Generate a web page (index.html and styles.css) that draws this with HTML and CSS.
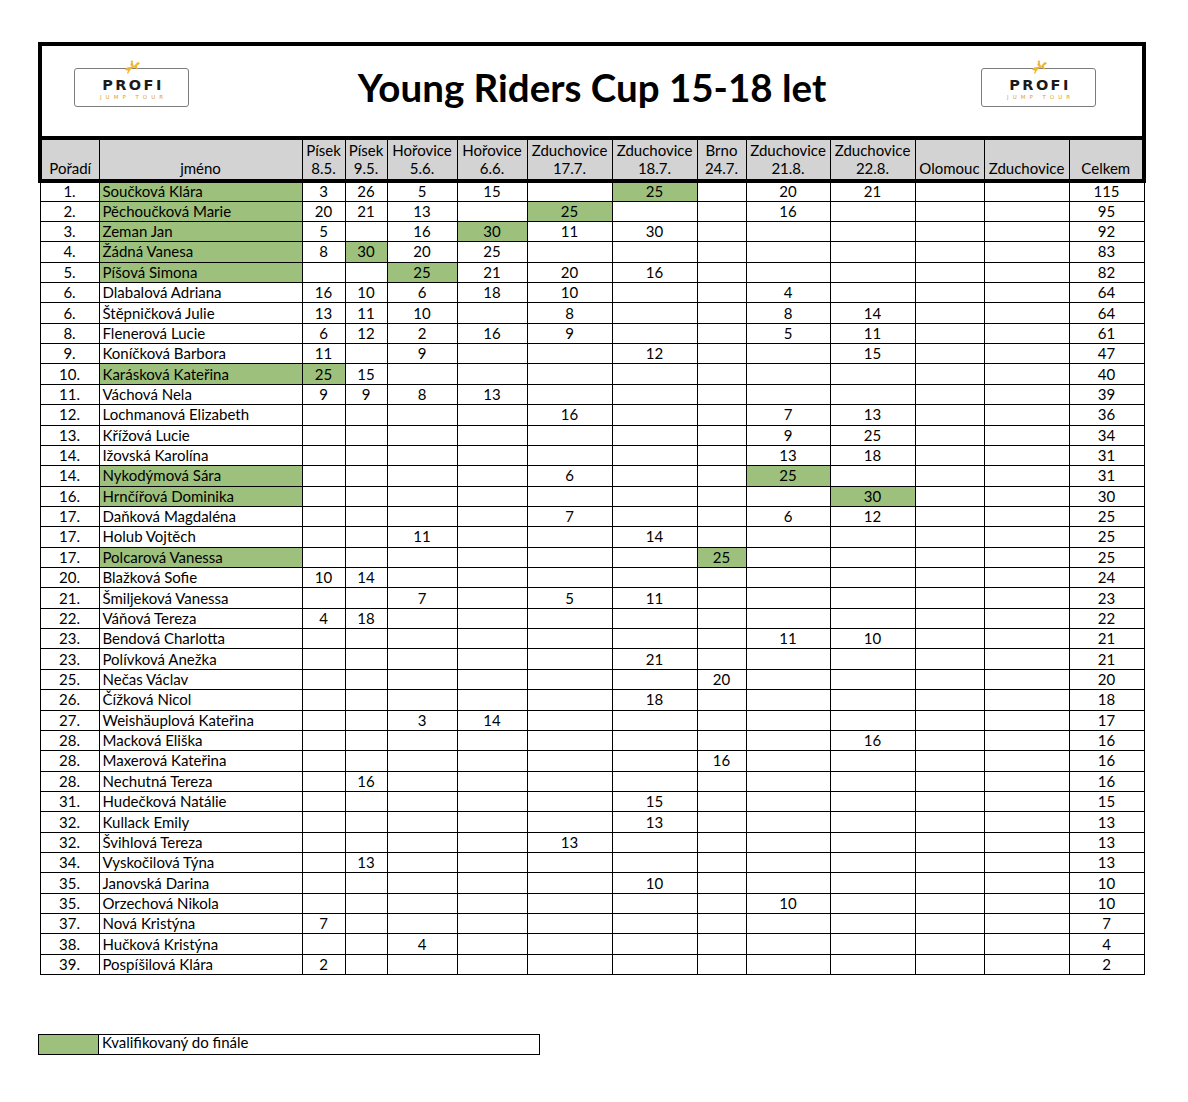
FILE: index.html
```html
<!DOCTYPE html>
<html lang="cs">
<head>
<meta charset="utf-8">
<title>Young Riders Cup 15-18 let</title>
<link rel="stylesheet" href="styles.css">
</head>
<body>
<table class="sheet">
<colgroup>
<col class="w59"><col class="w203"><col class="w43"><col class="w42"><col class="w70"><col class="w70"><col class="w85"><col class="w85"><col class="w49"><col class="w84"><col class="w85"><col class="w69"><col class="w85"><col class="w75">
</colgroup>
<thead>
<tr class="title-row">
<td colspan="14" class="title-cell">
<div class="title-grid">
<div class="logo logo-left">
<svg class="horse" viewBox="0 0 28 24" width="19" height="15"><path d="M2 15 C4 12 7 11 10 11 L17 9 C19 6 21 4 23 3 L26 5 L24 7 L22 8 C21 10 21 12 23 14 L21 15 C19 13 18 12 17 12 C15 13 13 14 12 14 L9 18 L7 22 L5 21 L7 17 C5 16 3 16 2 15 Z"/><circle cx="13" cy="2.6" r="1.9"/><path d="M11.5 4.5 L14.5 4.5 L16 9.5 L13 10.5 L10.5 8 Z"/></svg>
<span class="profi">PROFI</span>
<span class="jump">JUMP TOUR</span>
</div>
<h1 class="title">Young Riders Cup 15-18 let</h1>
<div class="logo logo-right">
<svg class="horse" viewBox="0 0 28 24" width="19" height="15"><path d="M2 15 C4 12 7 11 10 11 L17 9 C19 6 21 4 23 3 L26 5 L24 7 L22 8 C21 10 21 12 23 14 L21 15 C19 13 18 12 17 12 C15 13 13 14 12 14 L9 18 L7 22 L5 21 L7 17 C5 16 3 16 2 15 Z"/><circle cx="13" cy="2.6" r="1.9"/><path d="M11.5 4.5 L14.5 4.5 L16 9.5 L13 10.5 L10.5 8 Z"/></svg>
<span class="profi">PROFI</span>
<span class="jump">JUMP TOUR</span>
</div>
</div>
</td>
</tr>
<tr class="head-row">
<th class="first">Pořadí</th><th>jméno</th><th>Písek<br>8.5.</th><th>Písek<br>9.5.</th><th>Hořovice<br>5.6.</th><th>Hořovice<br>6.6.</th><th>Zduchovice<br>17.7.</th><th>Zduchovice<br>18.7.</th><th>Brno<br>24.7.</th><th>Zduchovice<br>21.8.</th><th>Zduchovice<br>22.8.</th><th>Olomouc</th><th>Zduchovice</th><th class="last">Celkem</th>
</tr>
</thead>
<tbody>
<tr><td>1.</td><td class="nm g">Součková Klára</td><td>3</td><td>26</td><td>5</td><td>15</td><td></td><td class="g">25</td><td></td><td>20</td><td>21</td><td></td><td></td><td>115</td></tr>
<tr><td>2.</td><td class="nm g">Pěchoučková Marie</td><td>20</td><td>21</td><td>13</td><td></td><td class="g">25</td><td></td><td></td><td>16</td><td></td><td></td><td></td><td>95</td></tr>
<tr><td>3.</td><td class="nm g">Zeman Jan</td><td>5</td><td></td><td>16</td><td class="g">30</td><td>11</td><td>30</td><td></td><td></td><td></td><td></td><td></td><td>92</td></tr>
<tr><td>4.</td><td class="nm g">Žádná Vanesa</td><td>8</td><td class="g">30</td><td>20</td><td>25</td><td></td><td></td><td></td><td></td><td></td><td></td><td></td><td>83</td></tr>
<tr><td>5.</td><td class="nm g">Píšová Simona</td><td></td><td></td><td class="g">25</td><td>21</td><td>20</td><td>16</td><td></td><td></td><td></td><td></td><td></td><td>82</td></tr>
<tr><td>6.</td><td class="nm">Dlabalová Adriana</td><td>16</td><td>10</td><td>6</td><td>18</td><td>10</td><td></td><td></td><td>4</td><td></td><td></td><td></td><td>64</td></tr>
<tr><td>6.</td><td class="nm">Štěpničková Julie</td><td>13</td><td>11</td><td>10</td><td></td><td>8</td><td></td><td></td><td>8</td><td>14</td><td></td><td></td><td>64</td></tr>
<tr><td>8.</td><td class="nm">Flenerová Lucie</td><td>6</td><td>12</td><td>2</td><td>16</td><td>9</td><td></td><td></td><td>5</td><td>11</td><td></td><td></td><td>61</td></tr>
<tr><td>9.</td><td class="nm">Koníčková Barbora</td><td>11</td><td></td><td>9</td><td></td><td></td><td>12</td><td></td><td></td><td>15</td><td></td><td></td><td>47</td></tr>
<tr><td>10.</td><td class="nm g">Karásková Kateřina</td><td class="g">25</td><td>15</td><td></td><td></td><td></td><td></td><td></td><td></td><td></td><td></td><td></td><td>40</td></tr>
<tr><td>11.</td><td class="nm">Váchová Nela</td><td>9</td><td>9</td><td>8</td><td>13</td><td></td><td></td><td></td><td></td><td></td><td></td><td></td><td>39</td></tr>
<tr><td>12.</td><td class="nm">Lochmanová Elizabeth</td><td></td><td></td><td></td><td></td><td>16</td><td></td><td></td><td>7</td><td>13</td><td></td><td></td><td>36</td></tr>
<tr><td>13.</td><td class="nm">Křížová Lucie</td><td></td><td></td><td></td><td></td><td></td><td></td><td></td><td>9</td><td>25</td><td></td><td></td><td>34</td></tr>
<tr><td>14.</td><td class="nm">Ižovská Karolína</td><td></td><td></td><td></td><td></td><td></td><td></td><td></td><td>13</td><td>18</td><td></td><td></td><td>31</td></tr>
<tr><td>14.</td><td class="nm g">Nykodýmová Sára</td><td></td><td></td><td></td><td></td><td>6</td><td></td><td></td><td class="g">25</td><td></td><td></td><td></td><td>31</td></tr>
<tr><td>16.</td><td class="nm g">Hrnčířová Dominika</td><td></td><td></td><td></td><td></td><td></td><td></td><td></td><td></td><td class="g">30</td><td></td><td></td><td>30</td></tr>
<tr><td>17.</td><td class="nm">Daňková Magdaléna</td><td></td><td></td><td></td><td></td><td>7</td><td></td><td></td><td>6</td><td>12</td><td></td><td></td><td>25</td></tr>
<tr><td>17.</td><td class="nm">Holub Vojtěch</td><td></td><td></td><td>11</td><td></td><td></td><td>14</td><td></td><td></td><td></td><td></td><td></td><td>25</td></tr>
<tr><td>17.</td><td class="nm g">Polcarová Vanessa</td><td></td><td></td><td></td><td></td><td></td><td></td><td class="g">25</td><td></td><td></td><td></td><td></td><td>25</td></tr>
<tr><td>20.</td><td class="nm">Blažková Sofie</td><td>10</td><td>14</td><td></td><td></td><td></td><td></td><td></td><td></td><td></td><td></td><td></td><td>24</td></tr>
<tr><td>21.</td><td class="nm">Šmiljeková Vanessa</td><td></td><td></td><td>7</td><td></td><td>5</td><td>11</td><td></td><td></td><td></td><td></td><td></td><td>23</td></tr>
<tr><td>22.</td><td class="nm">Váňová Tereza</td><td>4</td><td>18</td><td></td><td></td><td></td><td></td><td></td><td></td><td></td><td></td><td></td><td>22</td></tr>
<tr><td>23.</td><td class="nm">Bendová Charlotta</td><td></td><td></td><td></td><td></td><td></td><td></td><td></td><td>11</td><td>10</td><td></td><td></td><td>21</td></tr>
<tr><td>23.</td><td class="nm">Polívková Anežka</td><td></td><td></td><td></td><td></td><td></td><td>21</td><td></td><td></td><td></td><td></td><td></td><td>21</td></tr>
<tr><td>25.</td><td class="nm">Nečas Václav</td><td></td><td></td><td></td><td></td><td></td><td></td><td>20</td><td></td><td></td><td></td><td></td><td>20</td></tr>
<tr><td>26.</td><td class="nm">Čížková Nicol</td><td></td><td></td><td></td><td></td><td></td><td>18</td><td></td><td></td><td></td><td></td><td></td><td>18</td></tr>
<tr><td>27.</td><td class="nm">Weishäuplová Kateřina</td><td></td><td></td><td>3</td><td>14</td><td></td><td></td><td></td><td></td><td></td><td></td><td></td><td>17</td></tr>
<tr><td>28.</td><td class="nm">Macková Eliška</td><td></td><td></td><td></td><td></td><td></td><td></td><td></td><td></td><td>16</td><td></td><td></td><td>16</td></tr>
<tr><td>28.</td><td class="nm">Maxerová Kateřina</td><td></td><td></td><td></td><td></td><td></td><td></td><td>16</td><td></td><td></td><td></td><td></td><td>16</td></tr>
<tr><td>28.</td><td class="nm">Nechutná Tereza</td><td></td><td>16</td><td></td><td></td><td></td><td></td><td></td><td></td><td></td><td></td><td></td><td>16</td></tr>
<tr><td>31.</td><td class="nm">Hudečková Natálie</td><td></td><td></td><td></td><td></td><td></td><td>15</td><td></td><td></td><td></td><td></td><td></td><td>15</td></tr>
<tr><td>32.</td><td class="nm">Kullack Emily</td><td></td><td></td><td></td><td></td><td></td><td>13</td><td></td><td></td><td></td><td></td><td></td><td>13</td></tr>
<tr><td>32.</td><td class="nm">Švihlová Tereza</td><td></td><td></td><td></td><td></td><td>13</td><td></td><td></td><td></td><td></td><td></td><td></td><td>13</td></tr>
<tr><td>34.</td><td class="nm">Vyskočilová Týna</td><td></td><td>13</td><td></td><td></td><td></td><td></td><td></td><td></td><td></td><td></td><td></td><td>13</td></tr>
<tr><td>35.</td><td class="nm">Janovská Darina</td><td></td><td></td><td></td><td></td><td></td><td>10</td><td></td><td></td><td></td><td></td><td></td><td>10</td></tr>
<tr><td>35.</td><td class="nm">Orzechová Nikola</td><td></td><td></td><td></td><td></td><td></td><td></td><td></td><td>10</td><td></td><td></td><td></td><td>10</td></tr>
<tr><td>37.</td><td class="nm">Nová Kristýna</td><td>7</td><td></td><td></td><td></td><td></td><td></td><td></td><td></td><td></td><td></td><td></td><td>7</td></tr>
<tr><td>38.</td><td class="nm">Hučková Kristýna</td><td></td><td></td><td>4</td><td></td><td></td><td></td><td></td><td></td><td></td><td></td><td></td><td>4</td></tr>
<tr><td>39.</td><td class="nm">Pospíšilová Klára</td><td>2</td><td></td><td></td><td></td><td></td><td></td><td></td><td></td><td></td><td></td><td></td><td>2</td></tr>
</tbody>
</table>
<div class="legend">
<div class="legend-swatch"></div>
<div class="legend-text">Kvalifikovaný do finále</div>
</div>
</body>
</html>
```
FILE: styles.css
```css
html, body {
  margin: 0;
  padding: 0;
  background: #ffffff;
}
body {
  font-family: Lato, "Open Sans", "Liberation Sans", sans-serif;
  font-size: 15px;
  color: #000;
  padding-top: 42px;
}
.sheet {
  border-collapse: collapse;
  table-layout: fixed;
  width: 1104px;
  margin-left: 38px;
}
.w59 { width: 59px; }
.w203 { width: 203px; }
.w43 { width: 43px; }
.w42 { width: 42px; }
.w70 { width: 70px; }
.w85 { width: 85px; }
.w49 { width: 49px; }
.w84 { width: 84px; }
.w69 { width: 69px; }
.w75 { width: 75px; }

.title-cell {
  border: 4px solid #000;
  height: 90px;
  padding: 0;
  background: #fff;
}
.title-grid {
  display: grid;
  grid-template-columns: 1fr auto 1fr;
  align-items: center;
  height: 90px;
}
.title {
  margin: 0;
  font-family: Lato, "Open Sans", sans-serif;
  font-weight: 700;
  font-size: 38.5px;
  letter-spacing: 0;
  line-height: 42px;
  padding-bottom: 8px;
  color: #000;
}
.logo {
  position: relative;
  width: 113px;
  height: 37px;
  border: 1.5px solid #7d7d7d;
  border-radius: 3px;
  display: flex;
  flex-direction: column;
  align-items: center;
  justify-content: center;
  margin-bottom: 8px;
}
.logo-left {
  justify-self: start;
  margin-left: 32px;
}
.logo-right {
  justify-self: end;
  margin-right: 46px;
}
.horse {
  position: absolute;
  top: -9px;
  left: 50%;
  margin-left: -9px;
  fill: #f0b530;
}
.profi {
  font-family: "DejaVu Sans", Lato, sans-serif;
  font-weight: 700;
  font-size: 14.5px;
  letter-spacing: 2.4px;
  line-height: 13px;
  color: #1a1a1a;
  margin-top: 5px;
  padding-left: 3px;
}
.jump {
  font-family: "DejaVu Sans", sans-serif;
  font-size: 5.5px;
  letter-spacing: 4px;
  line-height: 6px;
  color: #e0a11c;
  margin-top: 2px;
  padding-left: 4px;
}

.head-row th {
  background: #d3d3d3;
  font-weight: 400;
  height: 36.7px;
  vertical-align: bottom;
  text-align: center;
  line-height: 18px;
  padding: 0 0 2px 0;
  border: 1px solid #000;
  border-top: 4px solid #000;
  border-bottom: 4px solid #000;
  white-space: nowrap;
}
.head-row th.first { border-left: 4px solid #000; }
.head-row th.last { border-right: 4px solid #000; }

tbody td {
  border: 1px solid #000;
  height: 19.36px;
  padding: 0;
  text-align: center;
  vertical-align: middle;
  line-height: 17px;
  white-space: nowrap;
  overflow: hidden;
}
tbody tr:first-child td {
  height: 17.86px;
}
tbody td.nm {
  text-align: left;
  padding-left: 3px;
}
tbody td.g {
  background: #9dc07d;
}

.legend {
  display: flex;
  width: 500px;
  height: 19px;
  margin-left: 38px;
  margin-top: 59px;
  border: 1px solid #000;
}
.legend-swatch {
  width: 59px;
  background: #9dc07d;
  border-right: 1px solid #000;
}
.legend-text {
  padding-left: 3px;
  line-height: 15px;
}
```
